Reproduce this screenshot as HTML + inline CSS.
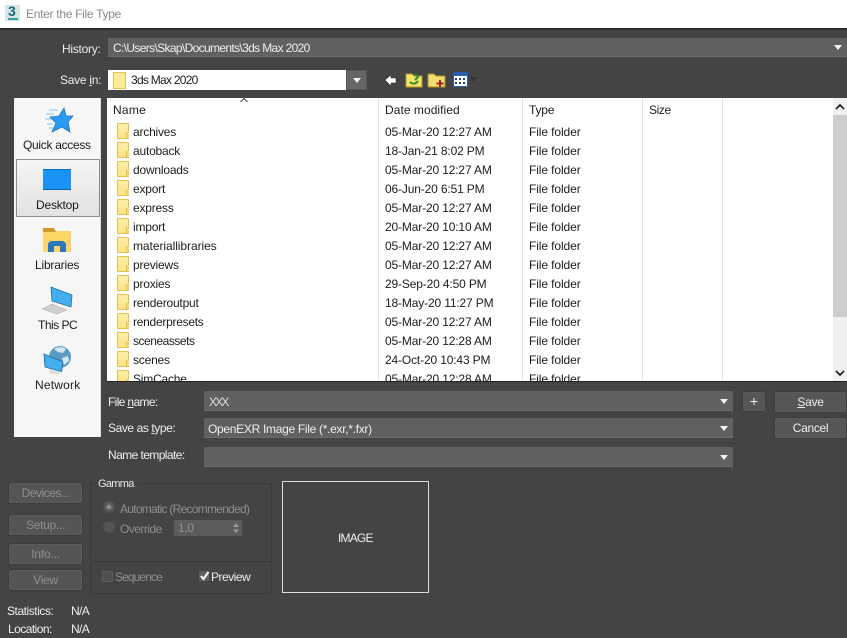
<!DOCTYPE html>
<html><head><meta charset="utf-8"><style>
html,body{margin:0;padding:0;width:847px;height:638px;overflow:hidden;background:#444}
body{position:relative;font-family:"Liberation Sans",sans-serif;font-size:12px;color:#eee;letter-spacing:-.2px}
.a{position:absolute}
.t{position:absolute;white-space:nowrap;line-height:14px}
.k{color:#1c1c1c}
.d{letter-spacing:-.15px}
.y{letter-spacing:-.1px}
.f{position:absolute;left:117px;width:12px;height:16px;background:linear-gradient(#fdeea8,#fbe388);border:1px solid #e3c34f;box-sizing:border-box;border-radius:1px}
.f:after{content:"";position:absolute;right:-1px;bottom:-1px;width:3px;height:7px;border-left:1px solid #e3c34f;border-bottom:1px solid #e3c34f;box-sizing:border-box;background:#f6d866}
.combo{position:absolute;background:#606060;border-bottom:1px solid #6d6d6d;box-sizing:border-box}
.ar{position:absolute;width:0;height:0;border-left:4px solid transparent;border-right:4px solid transparent;border-top:5px solid #f2f2f2}
.btn{position:absolute;background:#555;border:1px solid #3c3c3c;border-radius:3px;box-sizing:border-box;text-align:center;color:#8e8e8e;line-height:20px;box-shadow:inset 0 0 0 1px #5b5b5b}
.btn2{color:#eee;background:#565656;line-height:21px}
.sep{position:absolute;top:98px;width:1px;height:283px;background:#e4e4e4}
.ic{position:absolute}
</style></head><body>
<div class="a" style="left:0;top:0;width:847px;height:28px;background:#fff"></div>
<div class="a" style="left:0;top:28px;width:847px;height:2px;background:#2b2b2b"></div>
<div class="a" style="left:5px;top:5px;width:15px;height:16px;background:#d8e4e4"></div>
<div class="t" style="left:8px;top:4px;color:#0c6f78;font-weight:bold;font-size:14px;letter-spacing:0">3</div>
<div class="a" style="left:8px;top:18px;width:10px;height:2px;background:#2aa3a8"></div>
<div class="t" style="left:26px;top:7px;color:#8a8a8a;letter-spacing:-.29px">Enter the File Type</div>

<div class="t" style="left:62px;top:42px;letter-spacing:-.27px">History:</div>
<div class="combo" style="left:108px;top:38px;width:739px;height:19px"></div>
<div class="t" style="left:113px;top:41px;color:#eee;letter-spacing:-.65px">C:\Users\Skap\Documents\3ds Max 2020</div>
<div class="ar" style="left:834px;top:45px"></div>

<div class="t" style="left:60px;top:73px;letter-spacing:-.27px">Save <u>i</u>n:</div>
<div class="a" style="left:108px;top:70px;width:238px;height:20px;background:#fff"></div>
<div class="a" style="left:113px;top:72px;width:13px;height:17px;background:#fdeb9c;border:1px solid #e3c34f;box-sizing:border-box"></div>
<div class="t k" style="left:131px;top:73px;letter-spacing:-.73px">3ds Max 2020</div>
<div class="a" style="left:346px;top:70px;width:21px;height:20px;background:#666;border:1px solid #555;box-sizing:border-box"></div>
<div class="ar" style="left:353px;top:78px"></div>

<svg class="ic" style="left:384px;top:72px" width="96" height="18" viewBox="0 0 96 18">
<path d="M1 8 L7 3 V6 H12 V11 H7 V14Z" fill="#fff" stroke="#222" stroke-width=".5"/>
<path d="M22 2h6l2 2h8v11H22z" fill="#f4e36a" stroke="#b59a2c"/>
<path d="M26 10a5 5 0 0 0 8-1M31 2l3 3-3 3" fill="none" stroke="#2f8a2a" stroke-width="2"/>
<path d="M44 2h6l2 2h9v11H44z" fill="#f2dc70" stroke="#a98f2b"/>
<path d="M56 8v7M52.500 11.500h7" stroke="#a3222a" stroke-width="2"/>
<rect x="69.500" y=".5" width="14" height="14" fill="#fff" stroke="#2a5dab"/>
<rect x="69" y="0" width="15" height="4" fill="#2a5dab"/>
<path d="M71 6h2v2h-2zM75 6h2v2h-2zM79 6h2v2h-2zM71 10h2v2h-2zM75 10h2v2h-2zM79 10h2v2h-2z" fill="#24407e"/>
<path d="M86 5h7l-3.500 5z" fill="#333"/>
</svg>

<div class="a" style="left:14px;top:98px;width:87px;height:339px;background:#f6f6f6;border-right:1px solid #ddd;box-sizing:border-box"></div>
<div class="a" style="left:16px;top:159px;width:84px;height:58px;background:linear-gradient(#f5f5f5,#e2e2e2);border:1px solid #8f8f8f;box-sizing:border-box"></div>

<svg class="ic" style="left:44px;top:106px" width="30" height="28" viewBox="0 0 30 28">
<path d="M20 2 L22 10 L29 10 L24 16 L26 26 L18 21 L8 26 L12 17 L6 11 L15 10Z" fill="#2a9bf0" stroke="#1878c8" stroke-width=".8"/>
<path d="M5 4h9M2 8h8M1 13h6M3 18h6M5 22h4" stroke="#7cc6f5" stroke-width="1"/>
</svg>
<div class="t k" style="left:23px;top:138px;letter-spacing:-.3px">Quick access</div>

<div class="a" style="left:43px;top:169px;width:28px;height:21px;background:#1a93f6;border-bottom:1px solid #0d5fa8;border-top:1px solid #0d6fbd;box-sizing:border-box"></div>
<div class="t k" style="left:36px;top:198px">Desktop</div>

<svg class="ic" style="left:42px;top:227px" width="30" height="26" viewBox="0 0 30 26">
<path d="M1 4h28v21H1z" fill="#fbd568"/>
<path d="M1 1h11l2 4H1z" fill="#cf9a2a"/>
<path d="M6 25v-7a4 4 0 0 1 4-4h10a4 4 0 0 1 4 4v7h-6v-6h-6v6z" fill="#2b78b8"/>
</svg>
<div class="t k" style="left:35px;top:258px">Libraries</div>

<svg class="ic" style="left:40px;top:285px" width="34" height="32" viewBox="0 0 34 32">
<path d="M11 2 L32 10 L31 22 L12 16Z" fill="#45aef0" stroke="#1e6f9f" stroke-width=".8"/>
<path d="M2 24 L12 19 L27 25 L17 29Z" fill="#d0d0d0" stroke="#aaa" stroke-width=".5"/>
</svg>
<div class="t k" style="left:38px;top:318px;letter-spacing:-.5px">This PC</div>

<svg class="ic" style="left:42px;top:345px" width="32" height="32" viewBox="0 0 32 32">
<circle cx="18" cy="12" r="11" fill="#5a9cc4"/>
<path d="M12 4c4-3 10-2 12 0l-3 4-5-1zM20 13l6-2 1 5-5 4z" fill="#d4e6ef"/>
<path d="M2 9 L20.700 16.700 L19.700 26.700 L3 22Z" fill="#45aef0" stroke="#1e6f9f" stroke-width=".8"/>
<path d="M7 24l10 3 1 2H8z" fill="#ddd"/>
</svg>
<div class="t k" style="left:35px;top:378px;letter-spacing:.2px">Network</div>

<div class="a" style="left:107px;top:98px;width:740px;height:283px;background:#fff"></div>
<div class="a" style="left:107px;top:381px;width:740px;height:1px;background:#222"></div>
<div class="sep" style="left:378px"></div><div class="sep" style="left:522px"></div><div class="sep" style="left:642px"></div><div class="sep" style="left:722px"></div>
<div class="a" style="left:833px;top:98px;width:14px;height:283px;background:#f0f0f0"></div>
<div class="a" style="left:833px;top:115px;width:14px;height:202px;background:#cdcdcd"></div>
<svg class="ic" style="left:835px;top:103px" width="10" height="8" viewBox="0 0 10 8"><path d="M1 6 L5 2 L9 6" fill="none" stroke="#222" stroke-width="1.800"/></svg>
<svg class="ic" style="left:835px;top:369px" width="10" height="8" viewBox="0 0 10 8"><path d="M1 2 L5 6 L9 2" fill="none" stroke="#222" stroke-width="1.800"/></svg>
<svg class="ic" style="left:240px;top:97px" width="8" height="6" viewBox="0 0 8 6"><path d="M.5 5 L4 1.500 L7.500 5" fill="none" stroke="#444"/></svg>

<div class="t k" style="left:113px;top:103px;letter-spacing:.25px">Name</div>
<div class="t k" style="left:385px;top:103px;letter-spacing:.05px">Date modified</div>
<div class="t k" style="left:529px;top:103px">Type</div>
<div class="t k" style="left:649px;top:103px;letter-spacing:-.4px">Size</div>

<div class="f" style="top:123px"></div><div class="t k" style="left:133px;top:125px">archives</div><div class="t k d" style="left:385px;top:125px">05-Mar-20 12:27 AM</div><div class="t k y" style="left:529px;top:125px">File folder</div>
<div class="f" style="top:142px"></div><div class="t k" style="left:133px;top:144px">autoback</div><div class="t k d" style="left:385px;top:144px">18-Jan-21 8:02 PM</div><div class="t k y" style="left:529px;top:144px">File folder</div>
<div class="f" style="top:161px"></div><div class="t k" style="left:133px;top:163px">downloads</div><div class="t k d" style="left:385px;top:163px">05-Mar-20 12:27 AM</div><div class="t k y" style="left:529px;top:163px">File folder</div>
<div class="f" style="top:180px"></div><div class="t k" style="left:133px;top:182px">export</div><div class="t k d" style="left:385px;top:182px">06-Jun-20 6:51 PM</div><div class="t k y" style="left:529px;top:182px">File folder</div>
<div class="f" style="top:199px"></div><div class="t k" style="left:133px;top:201px">express</div><div class="t k d" style="left:385px;top:201px">05-Mar-20 12:27 AM</div><div class="t k y" style="left:529px;top:201px">File folder</div>
<div class="f" style="top:218px"></div><div class="t k" style="left:133px;top:220px">import</div><div class="t k d" style="left:385px;top:220px">20-Mar-20 10:10 AM</div><div class="t k y" style="left:529px;top:220px">File folder</div>
<div class="f" style="top:237px"></div><div class="t k" style="left:133px;top:239px;letter-spacing:-.06px">materiallibraries</div><div class="t k d" style="left:385px;top:239px">05-Mar-20 12:27 AM</div><div class="t k y" style="left:529px;top:239px">File folder</div>
<div class="f" style="top:256px"></div><div class="t k" style="left:133px;top:258px">previews</div><div class="t k d" style="left:385px;top:258px">05-Mar-20 12:27 AM</div><div class="t k y" style="left:529px;top:258px">File folder</div>
<div class="f" style="top:275px"></div><div class="t k" style="left:133px;top:277px">proxies</div><div class="t k d" style="left:385px;top:277px">29-Sep-20 4:50 PM</div><div class="t k y" style="left:529px;top:277px">File folder</div>
<div class="f" style="top:294px"></div><div class="t k" style="left:133px;top:296px">renderoutput</div><div class="t k d" style="left:385px;top:296px">18-May-20 11:27 PM</div><div class="t k y" style="left:529px;top:296px">File folder</div>
<div class="f" style="top:313px"></div><div class="t k" style="left:133px;top:315px;letter-spacing:-.27px">renderpresets</div><div class="t k d" style="left:385px;top:315px">05-Mar-20 12:27 AM</div><div class="t k y" style="left:529px;top:315px">File folder</div>
<div class="f" style="top:332px"></div><div class="t k" style="left:133px;top:334px;letter-spacing:-.47px">sceneassets</div><div class="t k d" style="left:385px;top:334px">05-Mar-20 12:28 AM</div><div class="t k y" style="left:529px;top:334px">File folder</div>
<div class="f" style="top:351px"></div><div class="t k" style="left:133px;top:353px">scenes</div><div class="t k d" style="left:385px;top:353px">24-Oct-20 10:43 PM</div><div class="t k y" style="left:529px;top:353px">File folder</div>
<div class="a" style="left:107px;top:370px;width:726px;height:11px;overflow:hidden">
<div class="f" style="left:10px;top:0"></div><div class="t k" style="left:26px;top:2px">SimCache</div><div class="t k d" style="left:278px;top:2px">05-Mar-20 12:28 AM</div><div class="t k y" style="left:422px;top:2px">File folder</div>
</div>

<div class="t" style="left:108px;top:395px;letter-spacing:-.65px">File <u>n</u>ame:</div>
<div class="combo" style="left:204px;top:391px;width:529px;height:20px"></div>
<div class="t" style="left:209px;top:395px;color:#ddd;letter-spacing:-1.800px">XXX</div>
<div class="ar" style="left:720px;top:399px"></div>
<div class="t" style="left:108px;top:421px;letter-spacing:-.42px">Save as <u>t</u>ype:</div>
<div class="combo" style="left:204px;top:418px;width:529px;height:20px"></div>
<div class="t" style="left:208px;top:422px;letter-spacing:-.3px">OpenEXR Image File (*.exr,*.fxr)</div>
<div class="ar" style="left:720px;top:426px"></div>
<div class="t" style="left:108px;top:448px;letter-spacing:-.58px">Name template:</div>
<div class="combo" style="left:204px;top:447px;width:529px;height:20px"></div>
<div class="ar" style="left:720px;top:455px"></div>

<div class="btn btn2" style="left:742px;top:391px;width:24px;height:21px;font-size:14px;line-height:19px;letter-spacing:0">+</div>
<div class="btn btn2" style="left:774px;top:391px;width:73px;height:22px;letter-spacing:-.3px"><u>S</u>ave</div>
<div class="btn btn2" style="left:774px;top:417px;width:73px;height:22px;letter-spacing:-.3px">Cancel</div>

<div class="btn" style="left:8px;top:482px;width:75px;height:22px;letter-spacing:-.5px">Devices...</div>
<div class="btn" style="left:8px;top:514px;width:75px;height:22px;letter-spacing:-.3px">Setup...</div>
<div class="btn" style="left:8px;top:543px;width:75px;height:22px">Info...</div>
<div class="btn" style="left:8px;top:569px;width:75px;height:22px;letter-spacing:-.3px">View</div>

<div class="a" style="left:90px;top:483px;width:182px;height:76px;border:1px solid #3a3a3a;border-bottom:none;box-sizing:border-box"></div>
<div class="a" style="left:96px;top:476px;width:42px;height:14px;background:#444"></div>
<div class="t" style="left:98px;top:477px;color:#e8e8e8;font-size:11px;letter-spacing:-.7px">Gamma</div>
<svg class="ic" style="left:102px;top:500px" width="14" height="36" viewBox="0 0 14 36">
<circle cx="7" cy="7" r="5.500" fill="#5a5a5a" stroke="#505050"/><circle cx="7" cy="7" r="2.500" fill="#8a8a8a"/>
<circle cx="7" cy="27" r="5.500" fill="#555" stroke="#505050"/></svg>
<div class="t" style="left:120px;top:502px;color:#8f8f8f;letter-spacing:-.73px">Automatic (Recommended)</div>
<div class="t" style="left:120px;top:522px;color:#8f8f8f;letter-spacing:-.53px">Override</div>
<div class="a" style="left:174px;top:520px;width:68px;height:16px;background:#5c5c5c"></div>
<div class="t" style="left:178px;top:521px;color:#8f8f8f;letter-spacing:-.3px">1.0</div>
<svg class="ic" style="left:232px;top:523px" width="8" height="11" viewBox="0 0 8 11"><path d="M4 0L7 4H1zM4 10L1 6.500H7z" fill="#999"/></svg>

<div class="a" style="left:90px;top:561px;width:182px;height:33px;border:1px solid #3a3a3a;border-radius:2px;box-sizing:border-box"></div>
<div class="a" style="left:102px;top:571px;width:11px;height:11px;background:#4f4f4f;border:1px solid #5c5c5c;box-sizing:border-box"></div>
<div class="t" style="left:115px;top:570px;color:#8f8f8f;letter-spacing:-.9px">Sequence</div>
<div class="a" style="left:199px;top:571px;width:10px;height:10px;background:#5e5e5e"></div>
<svg class="ic" style="left:199px;top:570px" width="11" height="11" viewBox="0 0 11 11"><path d="M2 6L4.500 9L9.500 2" fill="none" stroke="#fff" stroke-width="2"/></svg>
<div class="t" style="left:211px;top:570px;letter-spacing:-.5px">Preview</div>

<div class="a" style="left:282px;top:481px;width:147px;height:112px;border:1px solid #ddd;box-sizing:border-box"></div>
<div class="t" style="left:338px;top:531px;letter-spacing:-.8px">IMAGE</div>

<div class="t" style="left:7px;top:604px;letter-spacing:-.45px">Statistics:</div><div class="t" style="left:71px;top:604px;letter-spacing:-.65px">N/A</div>
<div class="t" style="left:8px;top:622px;letter-spacing:-.55px">Location:</div><div class="t" style="left:71px;top:622px;letter-spacing:-.65px">N/A</div>
</body></html>
